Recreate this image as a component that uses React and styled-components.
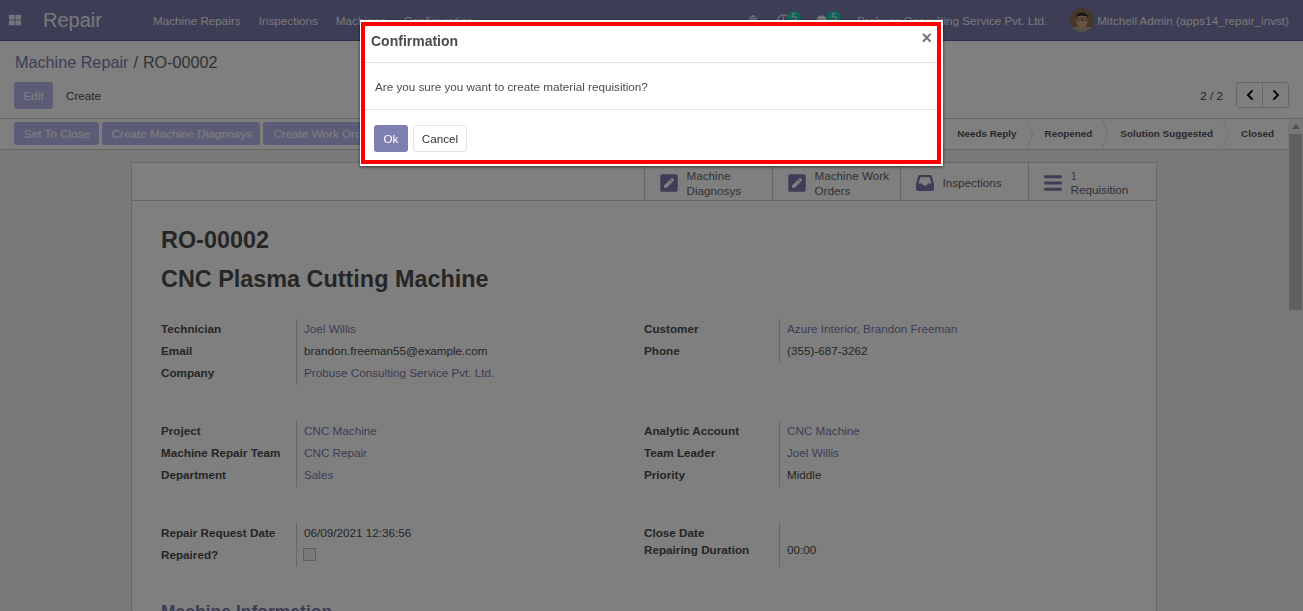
import React from "react";
import styled, { createGlobalStyle } from "styled-components";
import {
	FaBars,
	FaBug,
	FaChevronLeft,
	FaChevronRight,
	FaRegClock,
	FaComments,
	FaPenSquare,
	FaThLarge
} from "react-icons/fa";

const GlobalStyle = createGlobalStyle`
	html, body {
		margin: 0;
		height: 100%;
		overflow: hidden;
		background: #fff;
		font-family: "Liberation Sans", Arial, sans-serif;
		font-size: 11.7px;
		color: #4c4c4c;
	}
	* { box-sizing: border-box; }
`;

const menus = ["Machine Repairs", "Inspections", "Machines", "Configuration"];
const stages = ["Needs Reply", "Reopened", "Solution Suggested", "Closed"];
const actions = ["Set To Close", "Create Machine Diagnosys", "Create Work Orders"];

const InboxIcon = () => (
	<svg width="18" height="16" viewBox="0 0 18 16">
		<path
			fill="currentColor"
			fillRule="evenodd"
			d="M3.6 0h10.8c.5 0 1 .3 1.2.8L18 8.6V14c0 1.100-.9 2-2 2H2c-1.100 0-2-.9-2-2V8.600L2.400.8C2.600.3 3.100 0 3.600 0zM4.400 2.200 2.500 8.400h3.700l1 2.200h3.600l1-2.200h3.700l-1.900-6.200H4.400z"
		/>
	</svg>
);

const stats = [
	{ icon: <FaPenSquare />, lines: ["Machine", "Diagnosys"] },
	{ icon: <FaPenSquare />, lines: ["Machine Work", "Orders"] },
	{ icon: <InboxIcon />, lines: ["Inspections"] }
];

const leftGroups = [
	[
		["Technician", "Joel Willis", true],
		["Email", "brandon.freeman55@example.com"],
		["Company", "Probuse Consulting Service Pvt. Ltd.", true]
	],
	[
		["Project", "CNC Machine", true],
		["Machine Repair Team", "CNC Repair", true],
		["Department", "Sales", true]
	]
];

const rightGroups = [
	[
		["Customer", "Azure Interior, Brandon Freeman", true],
		["Phone", "(355)-687-3262"]
	],
	[
		["Analytic Account", "CNC Machine", true],
		["Team Leader", "Joel Willis", true],
		["Priority", "Middle"]
	]
];

const FieldGroup = ({ rows }) => (
	<Group>
		{rows.map(([label, value, link]) => (
			<Row key={label}>
				<Label>{label}</Label>
				<Value $link={link}>{value}</Value>
			</Row>
		))}
	</Group>
);

const Avatar = () => (
	<svg width="24" height="24" viewBox="0 0 24 24">
		<defs>
			<clipPath id="avatar-clip">
				<circle cx="12" cy="12" r="12" />
			</clipPath>
		</defs>
		<g clipPath="url(#avatar-clip)">
			<rect width="24" height="24" fill="#8a6f58" />
			<rect y="19" width="24" height="5" fill="#a9a59c" />
			<ellipse cx="12" cy="12.500" rx="5.500" ry="8" fill="#d9a989" />
			<path d="M6 9c1-6 11-6 12 0-3-1.800-9-1.800-12 0z" fill="#2e2018" />
			<rect x="7.700" y="10" width="3.800" height="2.400" fill="none" stroke="#4a3a30" strokeWidth=".6" />
			<rect x="12.500" y="10" width="3.800" height="2.400" fill="none" stroke="#4a3a30" strokeWidth=".6" />
		</g>
	</svg>
);

const App = () => {
	return (
		<>
			<GlobalStyle />
			<Page>
				<NavBar>
					<AppsIcon>
						<FaThLarge />
					</AppsIcon>
					<Brand>Repair</Brand>
					<Menu>
						{menus.map(m => (
							<MenuItem key={m}>{m}</MenuItem>
						))}
					</Menu>
					<Systray>
						<BugIcon>
							<FaBug />
						</BugIcon>
						<Notify>
							<FaRegClock />
							<Badge>5</Badge>
						</Notify>
						<Notify>
							<FaComments />
							<Badge>5</Badge>
						</Notify>
						<MenuItem>Probuse Consulting Service Pvt. Ltd.</MenuItem>
						<UserBox>
							<Avatar />
							<MenuItem>Mitchell Admin (apps14_repair_invst)</MenuItem>
						</UserBox>
					</Systray>
				</NavBar>

				<ControlPanel>
					<Breadcrumb>
						<Crumb>Machine Repair</Crumb>
						<Slash>/</Slash>
						<span>RO-00002</span>
					</Breadcrumb>
					<ControlRow>
						<div>
							<PrimaryButton>Edit</PrimaryButton>
							<LinkButton>Create</LinkButton>
						</div>
						<Pager>
							<span>2 / 2</span>
							<PagerButtons>
								<PagerButton>
									<FaChevronLeft />
								</PagerButton>
								<PagerButton>
									<FaChevronRight />
								</PagerButton>
							</PagerButtons>
						</Pager>
					</ControlRow>
				</ControlPanel>

				<Body>
					<Scroller>
						<StatusHeader>
							<Actions>
								{actions.map(a => (
									<ActionButton key={a}>{a}</ActionButton>
								))}
							</Actions>
							<Stages>
								{stages.map(s => (
									<Stage key={s}>{s}</Stage>
								))}
							</Stages>
						</StatusHeader>

						<Sheet>
							<StatBox>
								{stats.map(s => (
									<Stat key={s.lines[0]}>
										<StatIcon>{s.icon}</StatIcon>
										<StatText>
											{s.lines.map(l => (
												<div key={l}>{l}</div>
											))}
										</StatText>
									</Stat>
								))}
								<Stat>
									<StatIcon>
										<FaBars />
									</StatIcon>
									<StatText $tight>
										<StatCount>1</StatCount>
										<div>Requisition</div>
									</StatText>
								</Stat>
							</StatBox>

							<SheetBody>
								<Title>RO-00002</Title>
								<Title>CNC Plasma Cutting Machine</Title>
								<Columns>
									<div>
										{leftGroups.map((g, i) => (
											<FieldGroup key={i} rows={g} />
										))}
										<Group $last>
											<Row>
												<Label>Repair Request Date</Label>
												<Value>06/09/2021 12:36:56</Value>
											</Row>
											<Row>
												<Label>Repaired?</Label>
												<Value>
													<CheckBox />
												</Value>
											</Row>
										</Group>
									</div>
									<div>
										{rightGroups.map((g, i) => (
											<FieldGroup key={i} rows={g} />
										))}
										<Group $last>
											<Row $height="18px">
												<Label $tail="0">Close Date</Label>
												<Value $tail="0" />
											</Row>
											<Row $height="26px">
												<Label $tail="10px">Repairing Duration</Label>
												<Value $tail="10px">00:00</Value>
											</Row>
										</Group>
									</div>
								</Columns>
								<Section>Machine Information</Section>
							</SheetBody>
						</Sheet>
					</Scroller>
					<ScrollBar>
						<ScrollArrow />
						<ScrollThumb />
					</ScrollBar>
				</Body>

				<Scrim />
				<Modal>
					<ModalFrame>
						<ModalHeader>
							<ModalTitle>Confirmation</ModalTitle>
							<Close>×</Close>
						</ModalHeader>
						<ModalBody>Are you sure you want to create material requisition?</ModalBody>
						<ModalFooter>
							<OkButton>Ok</OkButton>
							<CancelButton>Cancel</CancelButton>
						</ModalFooter>
					</ModalFrame>
				</Modal>
			</Page>
		</>
	);
};

export default App;

const Page = styled.div`
	height: 100vh;
	display: flex;
	flex-direction: column;
	overflow: hidden;
`;

const NavBar = styled.header`
	flex: 0 0 41px;
	display: flex;
	align-items: center;
	background: #7c7bad;
	border-bottom: 1px solid #5e5d8c;
	color: #fff;
`;

const AppsIcon = styled.span`
	width: 29px;
	padding-left: 9px;
	display: flex;
	font-size: 12px;
	opacity: 0.85;
`;

const Brand = styled.span`
	margin-left: 14px;
	width: 110px;
	font-size: 20px;
	opacity: 0.9;
`;

const Menu = styled.nav`
	display: flex;
	gap: 18px;
`;

const MenuItem = styled.span`
	color: rgba(255, 255, 255, 0.9);
	white-space: nowrap;
`;

const Systray = styled.div`
	margin-left: auto;
	padding-right: 14px;
	display: flex;
	align-items: center;
`;

const BugIcon = styled.span`
	display: flex;
	font-size: 10px;
	margin-right: 19px;
	opacity: 0.8;
`;

const Notify = styled.span`
	position: relative;
	display: flex;
	width: 13px;
	margin-right: 27px;
	font-size: 13px;
	opacity: 0.9;
`;

const Badge = styled.span`
	position: absolute;
	left: 10px;
	top: -3px;
	width: 14px;
	height: 13px;
	border-radius: 7px;
	background: #0cd6bb;
	color: #fff;
	font-size: 10px;
	line-height: 13px;
	text-align: center;
`;

const UserBox = styled.span`
	margin-left: 23px;
	display: flex;
	align-items: center;
	gap: 3px;
`;

const ControlPanel = styled.div`
	flex: 0 0 78px;
	padding: 12px 14px 0;
	background: #fff;
	border-bottom: 1px solid #cfcfcf;
`;

const Breadcrumb = styled.div`
	height: 19px;
	font-size: 16.2px;
	line-height: 19px;
	color: #666;
	padding-left: 1px;
`;

const Crumb = styled.span`
	color: #7c7bad;
`;

const Slash = styled.span`
	margin: 0 5px;
`;

const ControlRow = styled.div`
	margin-top: 10px;
	display: flex;
	justify-content: space-between;
	align-items: flex-start;
`;

const PrimaryButton = styled.span`
	display: inline-block;
	width: 39px;
	height: 27px;
	border-radius: 3px;
	background: #bab9ee;
	color: #fff;
	line-height: 27px;
	text-align: center;
`;

const LinkButton = styled.span`
	margin-left: 13px;
	color: #4c4c4c;
`;

const Pager = styled.div`
	display: flex;
	align-items: center;
	gap: 13px;
	color: #4c4c4c;
`;

const PagerButtons = styled.div`
	display: flex;
	width: 53px;
	height: 26px;
	border: 1px solid #cfcfcf;
	border-radius: 3px;
`;

const PagerButton = styled.span`
	flex: 1;
	display: flex;
	align-items: center;
	justify-content: center;
	font-size: 12px;
	color: #000;
	& + & {
		border-left: 1px solid #cfcfcf;
	}
`;

const Body = styled.div`
	flex: 1;
	min-height: 0;
	display: flex;
`;

const Scroller = styled.div`
	flex: 1;
	min-width: 0;
	overflow: hidden;
	background: repeating-conic-gradient(#f7f7f7 0 25%, #ececec 0 50%) 0 0 / 2px 2px;
`;

const StatusHeader = styled.div`
	height: 31px;
	padding-left: 14px;
	display: flex;
	justify-content: space-between;
	align-items: stretch;
	background: #fff;
	border-bottom: 1px solid #cfcfcf;
`;

const Actions = styled.div`
	display: flex;
	align-items: center;
	gap: 3px;
	padding-bottom: 1px;
`;

const ActionButton = styled.span`
	height: 23px;
	padding: 0 8.5px 0 10px;
	border-radius: 3px;
	background: #bab9ee;
	color: #fff;
	line-height: 23px;
	white-space: nowrap;
`;

const Stages = styled.div`
	display: flex;
`;

const Stage = styled.span`
	position: relative;
	padding: 0 14px;
	font-size: 9.9px;
	font-weight: bold;
	line-height: 30px;
	white-space: nowrap;
	color: #555;
	&::after {
		content: "";
		position: absolute;
		top: 4px;
		right: -7px;
		width: 21px;
		height: 21px;
		transform: scaleX(0.38) rotate(45deg);
		border-top: 1px solid #cfcfcf;
		border-right: 1px solid #cfcfcf;
	}
	&:last-child::after {
		display: none;
	}
`;

const Sheet = styled.div`
	width: 1026px;
	margin: 12px 0 0 131px;
	background: #fff;
	border: 1px solid #cfcfcf;
`;

const StatBox = styled.div`
	height: 38px;
	display: flex;
	justify-content: flex-end;
	border-bottom: 1px solid #cfcfcf;
`;

const Stat = styled.div`
	width: 128px;
	padding-left: 15px;
	display: flex;
	align-items: center;
	gap: 8.5px;
	border-left: 1px solid #cfcfcf;
`;

const StatIcon = styled.span`
	width: 18px;
	margin-top: 2px;
	display: flex;
	justify-content: center;
	font-size: 20px;
	color: #7c7bad;
`;

const StatText = styled.div`
	padding-top: 2px;
	line-height: ${p => (p.$tight ? "14px" : "15px")};
	color: #666;
`;

const StatCount = styled.div`
	color: #7c7bad;
`;

const SheetBody = styled.div`
	padding: 26px 29px 0;
`;

const Title = styled.h1`
	margin: 0 0 12px;
	font-size: 23.4px;
	line-height: 27px;
	font-weight: bold;
	color: #4c4c4c;
`;

const Columns = styled.div`
	margin-top: 26px;
	display: grid;
	grid-template-columns: 483px 483px;
`;

const Group = styled.div`
	min-height: ${p => (p.$last ? "44px" : "66px")};
	margin-bottom: 36px;
`;

const Row = styled.div`
	height: ${p => p.$height || "22px"};
	display: flex;
`;

const Label = styled.div`
	width: 135px;
	padding-bottom: ${p => p.$tail || "4px"};
	display: flex;
	align-items: center;
	font-weight: bold;
	color: #4c4c4c;
`;

const Value = styled.div`
	flex: 1;
	display: flex;
	align-items: center;
	padding-left: 7px;
	padding-bottom: ${p => p.$tail || "4px"};
	border-left: 1px solid #cfcfcf;
	color: ${p => (p.$link ? "#7c7bad" : "#4c4c4c")};
`;

const CheckBox = styled.span`
	width: 13px;
	height: 13px;
	margin-left: -1px;
	border: 1px solid #bdbdbd;
	background: #f5f5f5;
`;

const Section = styled.h2`
	margin: -1px 0 0;
	font-size: 17.5px;
	font-weight: bold;
	color: #7c7bad;
`;

const ScrollBar = styled.div`
	flex: 0 0 15px;
	background: #f1f1f1;
	padding-top: 15px;
	position: relative;
`;

const ScrollArrow = styled.span`
	position: absolute;
	top: 5px;
	left: 4px;
	border-left: 4px solid transparent;
	border-right: 4px solid transparent;
	border-bottom: 5px solid #a3a3a3;
`;

const ScrollThumb = styled.div`
	height: 176px;
	background: #c1c1c1;
	margin: 0 1px;
`;

const Scrim = styled.div`
	position: fixed;
	inset: 0;
	background: rgba(0, 0, 0, 0.5);
`;

const Modal = styled.div`
	position: fixed;
	top: 20px;
	left: 360px;
	width: 583px;
	background: #fff;
	padding: 2px 2px 2px 1px;
	box-shadow: 0 1px 3px rgba(0, 0, 0, 0.6);
`;

const ModalFrame = styled.div`
	border: 4px solid #fe0000;
`;

const ModalHeader = styled.div`
	position: relative;
	height: 37px;
	padding: 7px 6px 0;
	border-bottom: 1px solid #dee2e6;
`;

const ModalTitle = styled.div`
	font-size: 14px;
	line-height: 16px;
	font-weight: bold;
	color: #4c4c4c;
`;

const Close = styled.span`
	position: absolute;
	top: 1px;
	right: 5px;
	font-size: 18px;
	font-weight: bold;
	line-height: 22px;
	color: #777;
`;

const ModalBody = styled.div`
	height: 47px;
	padding: 1px 0 0 10px;
	display: flex;
	align-items: center;
	border-bottom: 1px solid #dee2e6;
	color: #4c4c4c;
`;

const ModalFooter = styled.div`
	padding: 15px 9px 8px;
	display: flex;
	gap: 5px;
`;

const OkButton = styled.span`
	width: 34px;
	height: 27px;
	border-radius: 3px;
	background: #7f7eb0;
	color: #fff;
	line-height: 27px;
	text-align: center;
`;

const CancelButton = styled.span`
	width: 54px;
	height: 27px;
	border: 1px solid #dee2e6;
	border-radius: 3px;
	background: #fff;
	color: #333;
	line-height: 26px;
	text-align: center;
`;
